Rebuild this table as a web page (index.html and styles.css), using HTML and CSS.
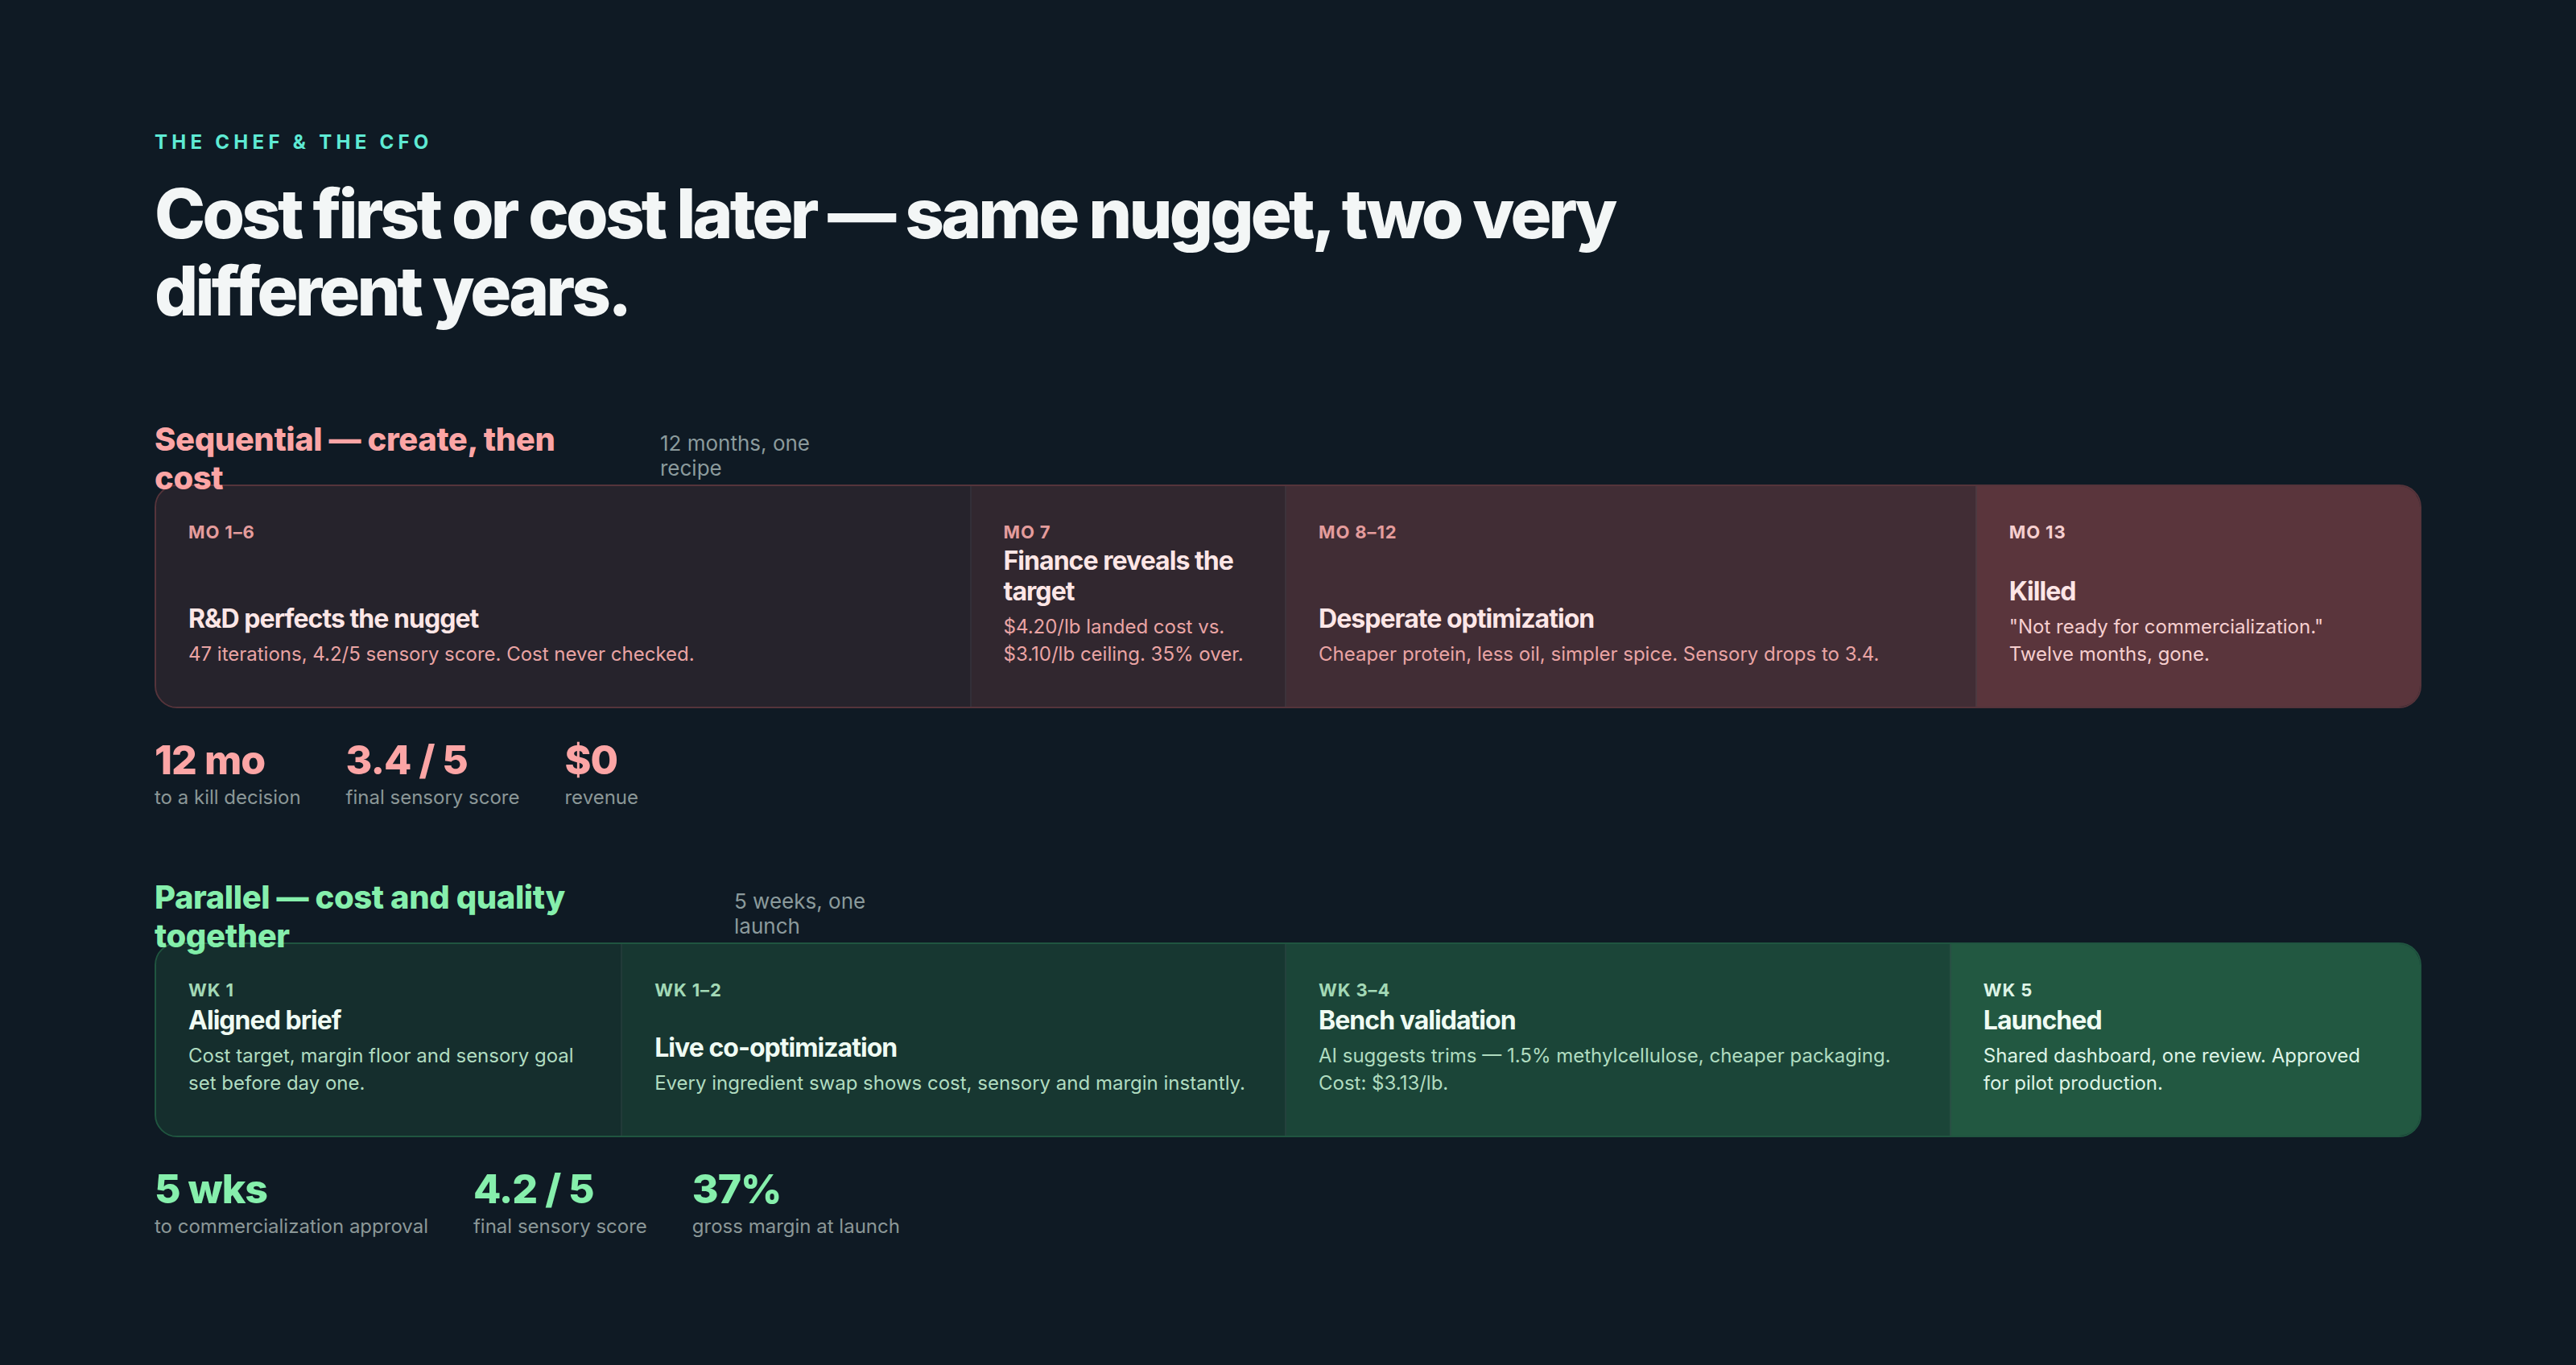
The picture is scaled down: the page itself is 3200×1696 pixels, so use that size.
FILE: index.html
```
<!DOCTYPE html>
<html lang="en">
<head>
<meta charset="utf-8">
<title>The Chef &amp; The CFO</title>
<link rel="stylesheet" href="styles.css">
</head>
<body>
<main class="page">
  <p class="eyebrow">THE CHEF &amp; THE CFO</p>
  <h1 class="headline">Cost first or cost later — same nugget, two very different years.</h1>

  <section class="track track--seq">
    <header class="track-head">
      <h2 class="track-title">Sequential — create, then cost</h2>
      <span class="track-meta">12 months, one recipe</span>
    </header>
    <div class="timeline">
      <div class="phase">
        <span class="phase-tag">MO 1–6</span>
        <div class="phase-body">
          <h3 class="phase-title">R&amp;D perfects the nugget</h3>
          <p class="phase-desc">47 iterations, 4.2/5 sensory score. Cost never checked.</p>
        </div>
      </div>
      <div class="phase">
        <span class="phase-tag">MO 7</span>
        <div class="phase-body">
          <h3 class="phase-title">Finance reveals the target</h3>
          <p class="phase-desc">$4.20/lb landed cost vs. $3.10/lb ceiling. 35% over.</p>
        </div>
      </div>
      <div class="phase">
        <span class="phase-tag">MO 8–12</span>
        <div class="phase-body">
          <h3 class="phase-title">Desperate optimization</h3>
          <p class="phase-desc">Cheaper protein, less oil, simpler spice. Sensory drops to 3.4.</p>
        </div>
      </div>
      <div class="phase">
        <span class="phase-tag">MO 13</span>
        <div class="phase-body">
          <h3 class="phase-title">Killed</h3>
          <p class="phase-desc">"Not ready for commercialization." Twelve months, gone.</p>
        </div>
      </div>
    </div>
    <div class="stats">
      <div class="stat">
        <div class="stat-value">12 mo</div>
        <div class="stat-label">to a kill decision</div>
      </div>
      <div class="stat">
        <div class="stat-value">3.4 / 5</div>
        <div class="stat-label">final sensory score</div>
      </div>
      <div class="stat">
        <div class="stat-value">$0</div>
        <div class="stat-label">revenue</div>
      </div>
    </div>
  </section>

  <section class="track track--par">
    <header class="track-head">
      <h2 class="track-title">Parallel — cost and quality together</h2>
      <span class="track-meta">5 weeks, one launch</span>
    </header>
    <div class="timeline">
      <div class="phase">
        <span class="phase-tag">WK 1</span>
        <div class="phase-body">
          <h3 class="phase-title">Aligned brief</h3>
          <p class="phase-desc">Cost target, margin floor and sensory goal set before day one.</p>
        </div>
      </div>
      <div class="phase">
        <span class="phase-tag">WK 1–2</span>
        <div class="phase-body">
          <h3 class="phase-title">Live co-optimization</h3>
          <p class="phase-desc">Every ingredient swap shows cost, sensory and margin instantly.</p>
        </div>
      </div>
      <div class="phase">
        <span class="phase-tag">WK 3–4</span>
        <div class="phase-body">
          <h3 class="phase-title">Bench validation</h3>
          <p class="phase-desc">AI suggests trims — 1.5% methylcellulose, cheaper packaging. Cost: $3.13/lb.</p>
        </div>
      </div>
      <div class="phase">
        <span class="phase-tag">WK 5</span>
        <div class="phase-body">
          <h3 class="phase-title">Launched</h3>
          <p class="phase-desc">Shared dashboard, one review. Approved for pilot production.</p>
        </div>
      </div>
    </div>
    <div class="stats">
      <div class="stat">
        <div class="stat-value">5 wks</div>
        <div class="stat-label">to commercialization approval</div>
      </div>
      <div class="stat">
        <div class="stat-value">4.2 / 5</div>
        <div class="stat-label">final sensory score</div>
      </div>
      <div class="stat">
        <div class="stat-value">37%</div>
        <div class="stat-label">gross margin at launch</div>
      </div>
    </div>
  </section>
</main>
</body>
</html>
```

FILE: styles.css
```
* {
  box-sizing: border-box;
  margin: 0;
  padding: 0;
}

html,
body {
  background: #0f1a24;
}

body {
  font-family: Inter, "Noto Sans", "Liberation Sans", sans-serif;
  color: #f3f6f6;
}

.page {
  padding: 162px 192px 120px;
}

.eyebrow {
  font-weight: 700;
  font-size: 24px;
  line-height: 30px;
  letter-spacing: 0.22em;
  color: #5eead4;
}

.headline {
  margin-top: 26px;
  max-width: 2000px;
  font-weight: 800;
  font-size: 85px;
  line-height: 96px;
  letter-spacing: -0.045em;
  color: #f3f6f6;
}

.track {
  margin-top: 112px;
}

.track--par {
  margin-top: 83px;
}

.track-head {
  display: flex;
  align-items: baseline;
  gap: 56px;
  height: 80px;
}

.track-title {
  flex: none;
  font-weight: 800;
  font-size: 40px;
  line-height: 48px;
  letter-spacing: -0.01em;
}

.track--seq .track-title {
  width: 572px;
  color: #fca5a5;
}

.track--par .track-title {
  width: 664px;
  color: #86efac;
}

.track-meta {
  flex: none;
  width: 220px;
  font-size: 26px;
  line-height: 31px;
  color: #8b9a9c;
}

.timeline {
  display: grid;
  border: 2px solid;
  border-radius: 28px;
  overflow: hidden;
}

.track--seq .timeline {
  grid-template-columns: 1014fr 392fr 859fr 551fr;
  border-color: rgba(248, 113, 113, 0.3);
}

.track--par .timeline {
  grid-template-columns: 580fr 826fr 827fr 583fr;
  border-color: rgba(74, 222, 128, 0.3);
}

.phase {
  display: flex;
  flex-direction: column;
  padding: 42px 40px 48px;
  border-right: 2px solid rgba(255, 255, 255, 0.06);
}

.phase:last-child {
  border-right: none;
}

.phase-tag {
  font-weight: 700;
  font-size: 22px;
  line-height: 30px;
  letter-spacing: 0.04em;
}

.phase-body {
  margin-top: auto;
  padding-top: 2px;
}

.track--par .phase-body {
  padding-top: 4px;
}

.phase-title {
  font-weight: 700;
  font-size: 32px;
  line-height: 38px;
  letter-spacing: -0.03em;
}

.phase-desc {
  margin-top: 8px;
  font-size: 24px;
  line-height: 34px;
}

/* sequential palette */
.track--seq .phase:nth-child(1) { background: rgba(248, 113, 113, 0.1); }
.track--seq .phase:nth-child(2) { background: rgba(248, 113, 113, 0.15); }
.track--seq .phase:nth-child(3) { background: rgba(248, 113, 113, 0.22); }
.track--seq .phase:nth-child(4) { background: rgba(248, 113, 113, 0.32); }

.track--seq .phase-tag { color: #e49c9c; }
.track--seq .phase-title { color: #fde6e6; }
.track--seq .phase-desc { color: #eaa4a4; }
.track--seq .phase:last-child .phase-tag,
.track--seq .phase:last-child .phase-desc { color: #f6cfcf; }

/* parallel palette */
.track--par .phase:nth-child(1) { background: rgba(74, 222, 128, 0.1); }
.track--par .phase:nth-child(2) { background: rgba(74, 222, 128, 0.15); }
.track--par .phase:nth-child(3) { background: rgba(74, 222, 128, 0.22); }
.track--par .phase:nth-child(4) { background: rgba(74, 222, 128, 0.32); }

.track--par .phase-tag { color: #a3d9b6; }
.track--par .phase-title { color: #effbf3; }
.track--par .phase-desc { color: #b0dcc0; }
.track--par .phase:last-child .phase-tag,
.track--par .phase:last-child .phase-desc { color: #def4e6; }

.stats {
  display: flex;
  gap: 56px;
  margin-top: 36px;
}

.stat-value {
  font-weight: 800;
  font-size: 50px;
  line-height: 56px;
  letter-spacing: -0.02em;
}

.track--seq .stat-value { color: #fca5a5; }
.track--par .stat-value { color: #86efac; }

.stat-label {
  margin-top: 2px;
  font-size: 24px;
  line-height: 34px;
  color: #8b9797;
}
```
